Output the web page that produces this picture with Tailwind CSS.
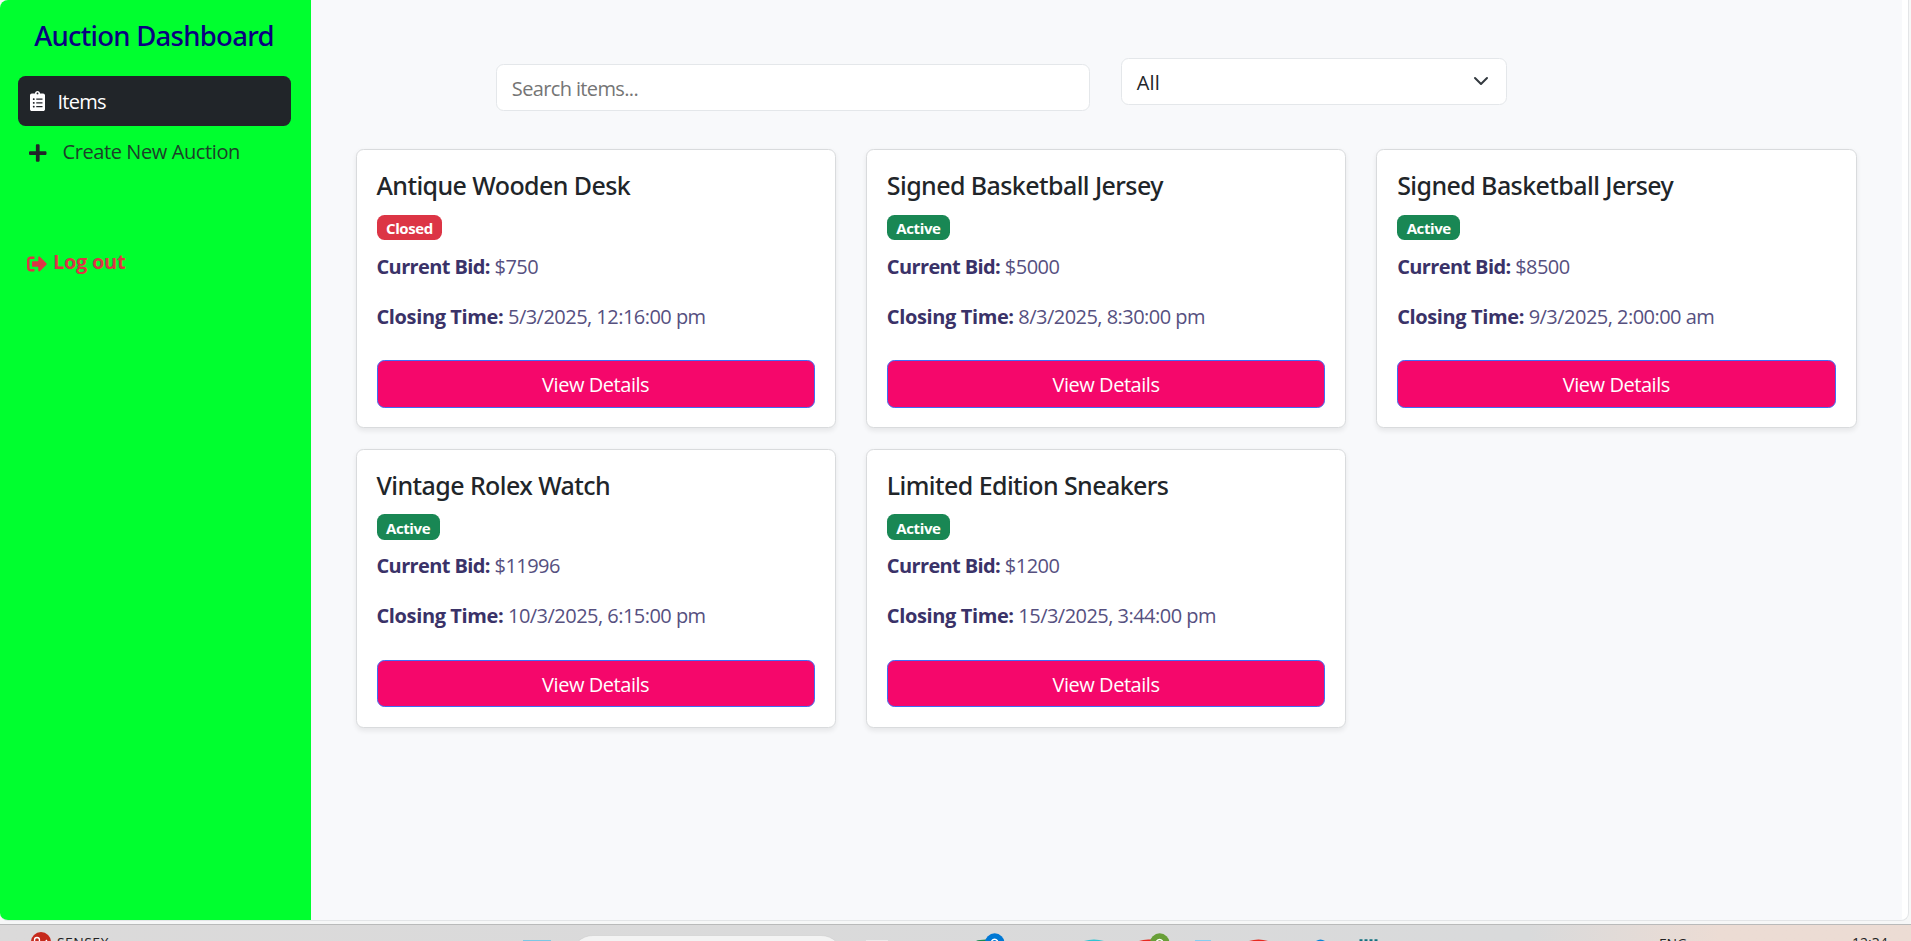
<!DOCTYPE html>
<html lang="en">
<head>
<meta charset="utf-8">
<title>Auction Dashboard</title>
<script src="https://cdn.jsdelivr.net/npm/@tailwindcss/browser@4"></script>
</head>
<body class="h-[941px] w-[1911px] overflow-hidden bg-[#f6f7f7] font-['Open_Sans','Noto_Sans',sans-serif] text-[20px] leading-[30px] text-[#212529]">

<!-- Browser page -->
<div class="flex h-[921px] w-[1909px] overflow-hidden rounded-lg rounded-tr-none border-r border-b border-[#e3e5e7] bg-white">

  <aside class="flex w-[310.5px] shrink-0 flex-col bg-[#00ff2f] pl-[17.5px] pr-[20px]">
    <h1 class="mt-[19px] text-center font-['Noto_Sans',sans-serif] text-[27.5px] font-medium leading-[34px] tracking-[-0.73px] text-[#0a0080]">Auction Dashboard</h1>
    <nav class="mt-[22.5px] flex flex-col">
      <a class="flex h-[50px] items-center rounded-[7.5px] bg-[#212529] pl-[12.5px] text-white">
        <svg class="h-5 w-[15px]" viewBox="0 0 384 512" fill="currentColor"><path d="M336 64h-80c0-35.3-28.7-64-64-64s-64 28.7-64 64H48C21.5 64 0 85.5 0 112v352c0 26.5 21.5 48 48 48h288c26.5 0 48-21.5 48-48V112c0-26.5-21.5-48-48-48zM96 424c-13.3 0-24-10.7-24-24s10.7-24 24-24 24 10.7 24 24-10.7 24-24 24zm0-96c-13.3 0-24-10.7-24-24s10.7-24 24-24 24 10.7 24 24-10.7 24-24 24zm0-96c-13.3 0-24-10.7-24-24s10.7-24 24-24 24 10.7 24 24-10.7 24-24 24zm96-192c13.3 0 24 10.7 24 24s-10.7 24-24 24-24-10.7-24-24 10.7-24 24-24zm128 368c0 4.4-3.6 8-8 8H168c-4.4 0-8-3.6-8-8v-16c0-4.4 3.6-8 8-8h144c4.4 0 8 3.6 8 8v16zm0-96c0 4.4-3.6 8-8 8H168c-4.4 0-8-3.6-8-8v-16c0-4.4 3.6-8 8-8h144c4.4 0 8 3.6 8 8v16zm0-96c0 4.4-3.6 8-8 8H168c-4.4 0-8-3.6-8-8v-16c0-4.4 3.6-8 8-8h144c4.4 0 8 3.6 8 8v16z"/></svg>
        <span class="ml-[12.5px] pt-[2px] tracking-[-0.74px]">Items</span>
      </a>
      <a class="flex h-[50px] items-center pl-[11.5px]">
        <svg class="mt-[5px] h-5 w-[17.5px]" viewBox="0 0 448 512" fill="currentColor"><path d="M416 208H272V64c0-17.67-14.33-32-32-32h-32c-17.67 0-32 14.33-32 32v144H32c-17.67 0-32 14.33-32 32v32c0 17.67 14.33 32 32 32h144v144c0 17.67 14.33 32 32 32h32c17.67 0 32-14.33 32-32V304h144c17.67 0 32-14.33 32-32v-32c0-17.67-14.33-32-32-32z"/></svg>
        <span class="ml-4 pt-[2px] tracking-[-0.4px] text-[#1c3f29]">Create New Auction</span>
      </a>
    </nav>
    <a class="mt-[61px] flex h-[50px] items-center pl-[9.5px] font-bold text-[#dc3545]">
      <svg class="mt-[4px] h-5 w-5" viewBox="0 0 512 512" fill="currentColor"><path d="M497 273L329 441c-15 15-41 4.5-41-17v-96H152c-13.3 0-24-10.7-24-24v-96c0-13.3 10.7-24 24-24h136V88c0-21.4 25.9-32 41-17l168 168c9.3 9.4 9.3 24.6 0 34zM192 436v-40c0-6.6-5.4-12-12-12H96c-17.7 0-32-14.3-32-32V160c0-17.7 14.3-32 32-32h84c6.6 0 12-5.4 12-12V76c0-6.6-5.4-12-12-12H96c-53 0-96 43-96 96v192c0 53 43 96 96 96h84c6.6 0 12-5.4 12-12z"/></svg>
      <span class="ml-[6px] tracking-[-0.3px]">Log out</span>
    </a>
  </aside>

  <main class="w-[1591px] shrink-0 bg-[#f8f9fb] pl-[45px]">
    <div class="ml-[140.3px] flex gap-[30.5px] pt-[57.5px]">
      <div class="mt-1.5 flex h-[47px] w-[594.5px] items-center rounded-[7.5px] border border-[#e4e7ea] bg-white pl-[15px] pt-[3px] tracking-[-0.63px] text-[#757575]">Search items...</div>
      <div class="flex h-[47px] w-[386.5px] items-center justify-between rounded-[7.5px] border border-[#e4e7ea] bg-white pr-[17px] pl-[15px] tracking-[0.1px]">
        <span class="pt-[3px]">All</span>
        <svg class="h-[16px] w-[16px]" viewBox="0 0 16 16" fill="none" stroke="#343a40" stroke-width="2" stroke-linecap="round" stroke-linejoin="round"><path d="m2 5 6 6 6-6"/></svg>
      </div>
    </div>
    <div id="cards" class="mt-[38.8px] grid w-[1501px] grid-cols-3 gap-x-[30px] gap-y-[20.5px]"></div>
  </main>
</div>

<!-- Windows taskbar, cut off by the bottom of the screen -->
<div class="mt-[3px] flex h-[17px] items-start overflow-hidden border-t border-[#b9baba] bg-linear-to-r from-[#dbdada] from-0% via-[#d9dadb] via-80% to-[#ecdcd4] to-90% text-[14px] leading-[14px] text-[#222]">
  <svg class="ml-[31px] mt-[7px] h-5 w-5 shrink-0" viewBox="0 0 20 20"><circle cx="10" cy="10" r="10" fill="#c62a1c"/><circle cx="6" cy="8" r="2.5" fill="none" stroke="#fff" stroke-width="1.3"/><path d="m8 11 3 2 5-5" fill="none" stroke="#fff" stroke-width="1.3"/></svg>
  <span class="ml-[6px] mt-[11px] w-[54px] shrink-0 tracking-[0.4px]">SENSEX</span>
  <svg class="ml-[389px] h-4 w-[900px] shrink-0" viewBox="500 925 900 16">
    <path d="M523 940h28v1h-28z" fill="#7cc7e4"/>
    <rect x="571" y="935.5" width="272" height="44" rx="22" fill="#f3f3f3" stroke="#cfcfcf" stroke-width=".6"/>
    <path d="M866 940h22v1h-22z" fill="#ebebeb"/>
    <path d="M976 941q3-1.5 10-1.5v1.5z" fill="#188a50"/>
    <circle cx="994.7" cy="943" r="9.7" fill="#0078d4"/>
    <path d="M991.5 941q3-3.5 6.2 0" fill="none" stroke="#fff" stroke-width="1.4"/>
    <path d="M1084 941q10-3 20 0z" fill="#2fc3d2"/>
    <path d="M1139 941q5-2 12-1.5v1.5z" fill="#e8281e"/>
    <circle cx="1159.7" cy="943" r="9.7" fill="#689f38"/>
    <path d="M1156.5 941q3-3 6.2 0" fill="none" stroke="#fff" stroke-width="1.4"/>
    <path d="M1195 940h16v1h-16z" fill="#86cdf0"/>
    <path d="M1249 941q9.5-3 19 0z" fill="#e8281e"/>
    <path d="M1316 941q4.5-3 9 0z" fill="#0c84d8"/>
    <path d="M1359.5 940.2h18" stroke="#12707f" stroke-width="2" stroke-dasharray="3 2"/>
  </svg>
  <span class="ml-[259px] mt-[12px] w-[28px] shrink-0 tracking-[-0.2px]">ENG</span>
  <span class="ml-[165px] mt-[11px] shrink-0">12:34</span>
</div>

<script>
const items = [
  ['Antique Wooden Desk', 'Closed', '$750', '5/3/2025, 12:16:00 pm'],
  ['Signed Basketball Jersey', 'Active', '$5000', '8/3/2025, 8:30:00 pm'],
  ['Signed Basketball Jersey', 'Active', '$8500', '9/3/2025, 2:00:00 am'],
  ['Vintage Rolex Watch', 'Active', '$11996', '10/3/2025, 6:15:00 pm'],
  ['Limited Edition Sneakers', 'Active', '$1200', '15/3/2025, 3:44:00 pm']
];
const badge = { Closed: 'bg-[#dc3545]', Active: 'bg-[#198754]' };
document.getElementById('cards').innerHTML = items.map(([name, status, bid, closing]) => `
  <article class="flex h-[279.2px] flex-col items-start rounded-[7.5px] border border-[#d9dbdd] bg-white px-[20px] pt-[20.2px] shadow-[0_2.5px_5px_rgba(0,0,0,0.075)]">
    <h2 class="font-['Noto_Sans',sans-serif] text-[25px] font-medium tracking-[-0.58px]">${name}</h2>
    <span class="mt-[14.2px] flex h-[25.5px] items-center rounded-[7.5px] px-[9.5px] pt-px text-[15px] font-bold tracking-[-0.4px] text-white ${badge[status]}">${status}</span>
    <p class="mt-[11.6px] tracking-[-0.54px] text-[#56507f]"><b class="tracking-[-0.62px] text-[#3a3268]">Current Bid:</b> ${bid}</p>
    <p class="mt-5 tracking-[-0.53px] text-[#56507f]"><b class="tracking-[-0.38px] text-[#3a3268]">Closing Time:</b> ${closing}</p>
    <button class="mt-[28.5px] h-[47.5px] w-full rounded-[7.5px] border border-[#3f6df5] bg-[#f5076b] pt-[2.5px] tracking-[-0.45px] text-white">View Details</button>
  </article>`).join('');
</script>
</body>
</html>
